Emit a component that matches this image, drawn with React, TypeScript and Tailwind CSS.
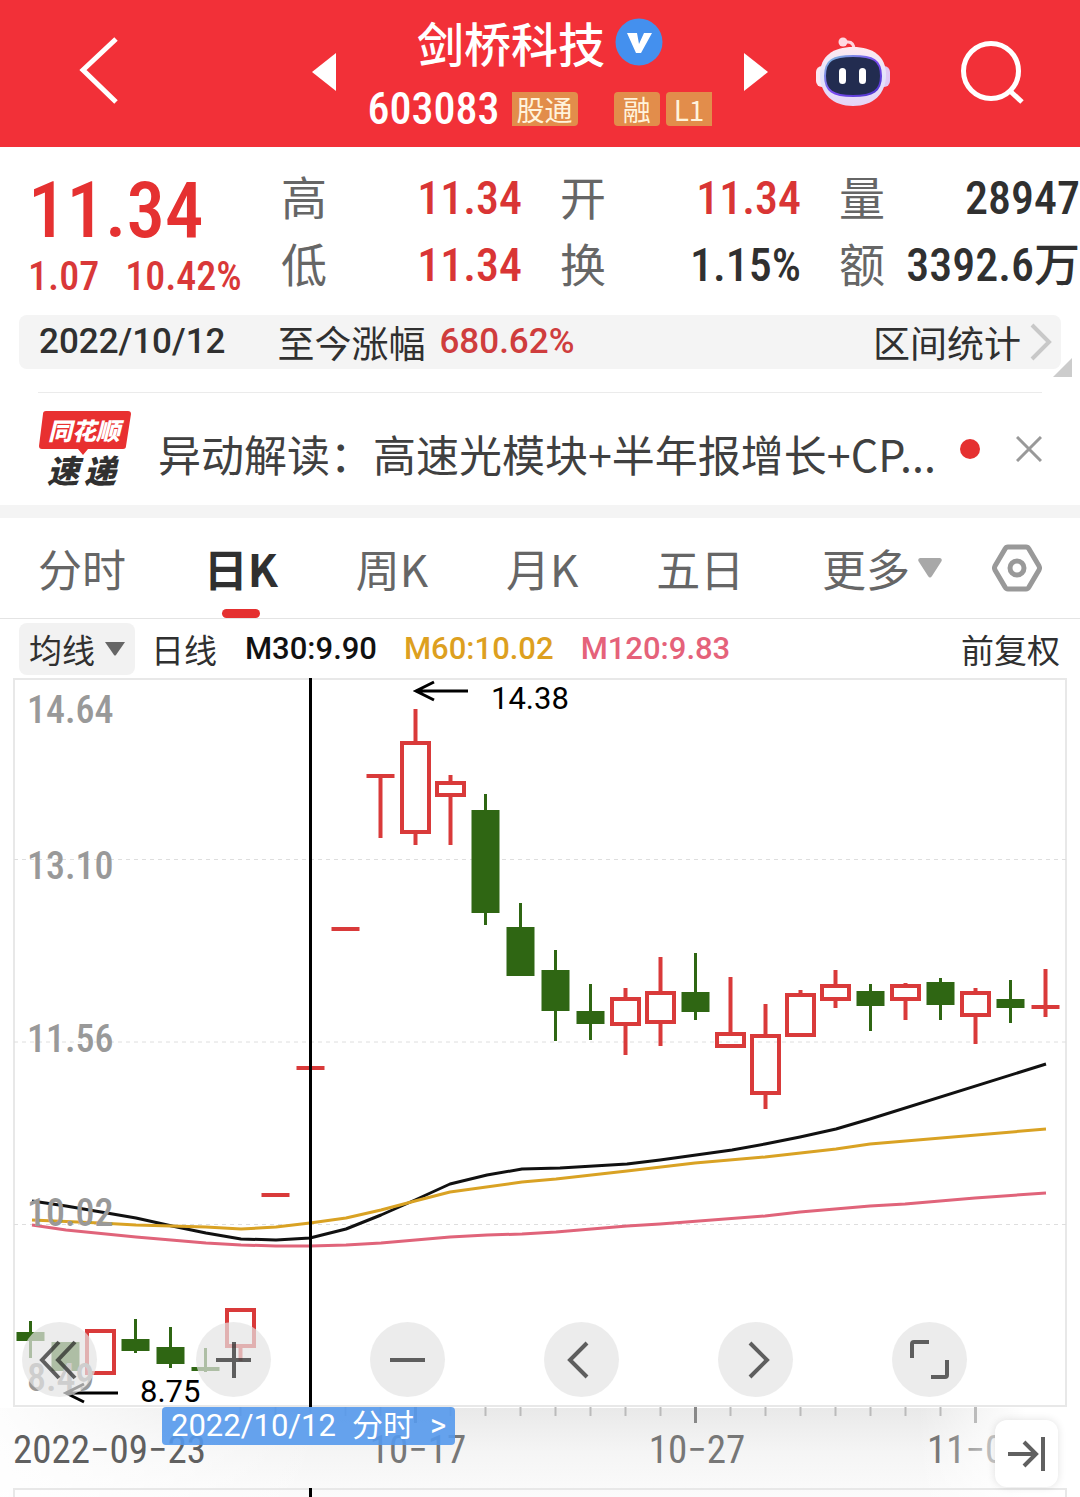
import type { ReactNode } from 'react'
import clsx from 'clsx'

const CJK = "font-['Noto_Sans_CJK_SC',sans-serif]"
const DIGITS = "font-['Roboto_Condensed','Liberation_Sans_Narrow',Roboto,'Noto_Sans_CJK_SC',sans-serif]"
const WIDE_DIGITS = "font-[Roboto,'Noto_Sans_CJK_SC',sans-serif]"

const RED = '#d93a3a'
const GREEN = '#2f6613'

const QUOTES = [
  { top: '高', topValue: '11.34', topRed: true, bottom: '低', bottomValue: '11.34', bottomRed: true },
  { top: '开', topValue: '11.34', topRed: true, bottom: '换', bottomValue: '1.15%', bottomRed: false },
  { top: '量', topValue: '28947', topRed: false, bottom: '额', bottomValue: '3392.6万', bottomRed: false },
]

const TABS = ['分时', '日K', '周K', '月K', '五日']

// slot, high, body top, body bottom, low, rising
const CANDLES: [number, number, number, number, number, boolean][] = [
  [0, 1321, 1332, 1341, 1358, false],
  [1, 1342, 1342, 1371, 1371, false],
  [2, 1329, 1329, 1375, 1375, true],
  [3, 1319, 1339, 1351, 1353, false],
  [4, 1327, 1347, 1364, 1368, false],
  [5, 1348, 1367, 1371, 1372, false],
  [6, 1308, 1308, 1348, 1361, true],
  [7, 1193, 1193, 1197, 1197, true],
  [8, 1066, 1066, 1070, 1070, true],
  [9, 927, 927, 931, 931, true],
  [10, 774, 774, 778, 838, true],
  [11, 709, 741, 834, 845, true],
  [12, 775, 781, 797, 845, true],
  [13, 794, 810, 913, 925, false],
  [14, 903, 927, 976, 976, false],
  [15, 950, 970, 1011, 1041, false],
  [16, 984, 1011, 1024, 1040, false],
  [17, 988, 997, 1026, 1055, true],
  [18, 957, 991, 1024, 1046, true],
  [19, 953, 992, 1012, 1020, false],
  [20, 977, 1032, 1048, 1048, true],
  [21, 1004, 1034, 1095, 1109, true],
  [22, 990, 993, 1037, 1037, true],
  [23, 970, 984, 1001, 1008, true],
  [24, 984, 991, 1006, 1031, false],
  [25, 983, 984, 1001, 1020, true],
  [26, 978, 982, 1005, 1020, false],
  [27, 988, 991, 1017, 1044, true],
  [28, 980, 999, 1008, 1023, false],
  [29, 969, 1005, 1009, 1017, true],
]

const MA30 =
  '32,1201 66,1206 136,1218 172,1226 206,1233 241,1239 276,1240 310,1238 346,1229 381,1215 415,1200 450,1184 487,1175 522,1169 560,1168 627,1164 660,1160 732,1150 765,1144 800,1137 836,1129 870,1119 1046,1064'
const MA60 =
  '32,1220 100,1223 136,1225 206,1227 241,1229 276,1227 310,1223 346,1218 381,1210 415,1201 450,1192 522,1182 556,1179 627,1171 695,1163 765,1157 836,1149 870,1144 1046,1129'
const MA120 =
  '32,1225 66,1230 136,1237 206,1243 241,1245 276,1246 310,1246 346,1245 381,1243 450,1237 487,1235 522,1234 556,1232 627,1226 660,1224 765,1216 800,1212 870,1206 905,1204 975,1198 1046,1193'

const PRICES = [
  { label: '14.64', y: 723 },
  { label: '13.10', y: 879 },
  { label: '11.56', y: 1052 },
  { label: '10.02', y: 1226 },
  { label: '8.49', y: 1391 },
]

function Robot() {
  return (
    <svg width="76" height="70" viewBox="0 0 76 70">
      <defs>
        <linearGradient id="shell" x1="0" y1="0" x2="0" y2="1">
          <stop offset="0" stopColor="#ffe9f0" />
          <stop offset="0.5" stopColor="#e3e4fb" />
          <stop offset="1" stopColor="#e6d4f6" />
        </linearGradient>
        <linearGradient id="rim" x1="0" y1="0" x2="1" y2="1">
          <stop offset="0" stopColor="#7fc4dc" />
          <stop offset="0.5" stopColor="#7b4bf0" />
          <stop offset="1" stopColor="#4a35c8" />
        </linearGradient>
      </defs>
      <rect x="1" y="29" width="12" height="21" rx="6" fill="#fbe8f2" />
      <rect x="63" y="29" width="12" height="21" rx="6" fill="#dfc9f5" />
      <path d="M28 5h5c4 0 6 3 6 8" fill="none" stroke="#ffd3dc" strokeWidth="3" />
      <circle cx="28" cy="5" r="4.5" fill="#ffd9e2" />
      <path d="M38 10c20 0 33 9 33 28S58 69 38 69 5 57 5 38s13-28 33-28z" fill="url(#shell)" />
      <path
        d="M38 19c20 0 28 4 28 20 0 15-8 20-28 20s-28-5-28-20c0-16 8-20 28-20z"
        fill="#222c50"
        stroke="url(#rim)"
        strokeWidth="2"
      />
      <rect x="24" y="31" width="7" height="16" rx="3.5" fill="#fff" />
      <rect x="44" y="31" width="7" height="16" rx="3.5" fill="#fff" />
    </svg>
  )
}

function Header() {
  return (
    <header className="grid h-[147px] grid-cols-[312px_1fr_312px] items-center bg-[#f23038] pb-1 text-white">
      <button aria-label="返回" className="justify-self-start pl-[78px]">
        <svg width="42" height="72" viewBox="0 0 42 72" fill="none" stroke="#fff" strokeWidth="5">
          <path d="M38 3 5 34l33 32" />
        </svg>
      </button>
      <div className="flex items-center justify-between">
        <button aria-label="上一只">
          <svg width="24" height="38" viewBox="0 0 24 38" fill="#fff">
            <path d="M24 0v38L0 19z" />
          </svg>
        </button>
        <div className="flex flex-col items-center pt-1">
          <h1 className="flex h-[70px] items-center gap-[10px] text-[47px] leading-[64px] font-medium">
            剑桥科技
            <svg width="48" height="48" viewBox="0 0 48 48">
              <circle cx="24" cy="24" r="23.5" fill="#4490ee" />
              <path d="M12 15h10l2 11 5-11h8L26 35h-5z" fill="#fff" />
            </svg>
          </h1>
          <div className="flex h-[64px] items-center">
            <span className={clsx(DIGITS, 'mr-3 text-[44px] font-medium')}>603083</span>
            <span className="flex h-[34px] items-center rounded-r-sm bg-[#e28d4b] px-[5px] text-[28px] leading-[30px] text-[#fff3dc]">股通</span>
            <span className="ml-9 flex h-[34px] items-center rounded-sm bg-[#e28d4b] px-[9px] text-[28px] leading-[30px] text-[#fff3dc]">融</span>
            <span className="ml-[6px] flex h-[34px] items-center rounded-l-sm bg-[#e28d4b] px-2 text-[28px] leading-[30px] text-[#fff3dc]">L1</span>
          </div>
        </div>
        <button aria-label="下一只">
          <svg width="24" height="38" viewBox="0 0 24 38" fill="#fff">
            <path d="M0 0v38l24-19z" />
          </svg>
        </button>
      </div>
      <div className="flex items-center justify-between pr-[56px] pl-[47px]">
        <button aria-label="智能助手">
          <Robot />
        </button>
        <button aria-label="搜索">
          <svg width="64" height="64" viewBox="0 0 64 64" fill="none" stroke="#fff" strokeWidth="5">
            <circle cx="31" cy="31" r="27.5" />
            <path d="m50 51 12 11" />
          </svg>
        </button>
      </div>
    </header>
  )
}

function Quote() {
  return (
    <section className="grid grid-cols-[243px_1fr_1fr_1fr] gap-x-[38px] pt-[18px] pb-[14px]">
      <div className={clsx(DIGITS, 'pl-7 font-medium whitespace-nowrap text-[#e53131]')}>
        <div className="h-[88px] text-[77px] leading-[92px]">11.34</div>
        <div className="flex gap-[26px] text-[40px] leading-[48px] text-[#d93838]">
          <span>1.07</span>
          <span>10.42%</span>
        </div>
      </div>
      {QUOTES.map((q) => (
        <dl
          key={q.top}
          className="grid auto-rows-[67px] grid-cols-[auto_1fr] text-[46px] leading-[61px] whitespace-nowrap text-[#666]"
        >
          <dt>{q.top}</dt>
          <dd
            className={clsx(DIGITS, 'text-right leading-[67px] font-medium', q.topRed ? 'text-[#d93535]' : 'text-[#303030]')}
          >
            {q.topValue}
          </dd>
          <dt>{q.bottom}</dt>
          <dd
            className={clsx(DIGITS, 'text-right leading-[67px] font-medium', q.bottomRed ? 'text-[#d93535]' : 'text-[#303030]')}
          >
            {q.bottomValue}
          </dd>
        </dl>
      ))}
    </section>
  )
}

function RangeBar() {
  return (
    <div className="relative mx-[19px] flex h-[54px] items-center rounded-lg bg-[#f4f4f4] pr-2 pl-5 text-[37px] leading-[52px] text-[#303030]">
      <span className={clsx(WIDE_DIGITS, 'text-[35px] font-medium')}>2022/10/12</span>
      <span className="ml-[52px]">至今涨幅</span>
      <span className={clsx(WIDE_DIGITS, 'ml-[14px] text-[35px] font-medium text-[#cf3d3d]')}>680.62%</span>
      <button className="ml-auto flex items-center gap-2">
        区间统计
        <svg width="24" height="40" viewBox="0 0 24 40" fill="none" stroke="#c8c8c8" strokeWidth="4">
          <path d="m3 3 17 17L3 37" />
        </svg>
      </button>
      <svg className="absolute -right-[11px] -bottom-2" width="19" height="19" viewBox="0 0 19 19" fill="#ccc">
        <path d="M19 0v19H0z" />
      </svg>
    </div>
  )
}

function News() {
  return (
    <section className="mx-[38px] mt-[23px] flex h-[113px] items-center border-t border-[#ebebeb]">
      <svg className="shrink-0 overflow-visible" width="94" height="78" viewBox="0 0 94 78">
        <path d="M8 1h82q3 0 3 3l-5 32q0 3-3 3H50l-5 6-5-6H4q-3 0-3-3L5 4q0-3 3-3z" fill="#e83030" />
        <g fontWeight="900" fontStyle="italic">
          <text x="10" y="30" fontSize="24" fill="#fff">同花顺</text>
          <text x="9" y="73" fontSize="32" fill="#303030">速</text>
          <text x="46" y="73" fontSize="32" fill="#303030">递</text>
        </g>
      </svg>
      <a href="#news" className="ml-[26px] min-w-0 flex-1 pt-2 text-[43px] leading-[64px] whitespace-nowrap text-[#404040]">
        异动解读：高速光模块+半年报增长+CP...
      </a>
      <span className="ml-4 size-5 shrink-0 rounded-full bg-[#e53030]" />
      <button aria-label="关闭" className="ml-9 shrink-0">
        <svg width="26" height="26" viewBox="0 0 26 26" stroke="#999" strokeWidth="3">
          <path d="m1 1 24 24M25 1 1 25" />
        </svg>
      </button>
    </section>
  )
}

function Tabs() {
  return (
    <div className="flex h-[101px] items-center border-b border-[#e4e4e4] px-[38px] text-[#666]">
      <nav className="flex h-full flex-1 items-center justify-between text-[44px] whitespace-nowrap">
        {TABS.map((tab) => (
          <button
            key={tab}
            className={clsx('relative h-full', tab === '日K' && 'font-bold text-[#303030]')}
          >
            {tab}
            {tab === '日K' && (
              <span className="absolute bottom-0 left-1/2 h-[9px] w-[38px] -translate-x-1/2 rounded-full bg-[#e53030]" />
            )}
          </button>
        ))}
        <button className="flex h-full items-center gap-2">
          更多
          <svg width="24" height="20" viewBox="0 0 24 20" fill="#a8a8a8">
            <path d="M2 0h20q3 1 1 4L14 18q-2 3-4 0L1 4Q-1 1 2 0z" />
          </svg>
        </button>
      </nav>
      <button aria-label="设置" className="ml-[50px]">
        <svg width="50" height="48" viewBox="0 0 50 48" fill="none" stroke="#999" strokeWidth="5">
          <path d="M16 3h18q2 0 3 2l10 17q1 2 0 4L37 43q-1 2-3 2H16q-2 0-3-2L3 26q-1-2 0-4L13 5q1-2 3-2z" />
          <circle cx="25" cy="24" r="7" />
        </svg>
      </button>
    </div>
  )
}

function Legend() {
  return (
    <div className="flex h-[59px] items-center pr-5 pl-[19px] text-[33px] leading-[48px] whitespace-nowrap text-[#303030]">
      <button className="flex h-[52px] items-center gap-[10px] rounded-lg bg-[#f2f2f2] px-[10px]">
        均线
        <svg width="20" height="14" viewBox="0 0 20 14" fill="#666">
          <path d="M0 0h20L11 13q-1 1-2 0z" />
        </svg>
      </button>
      <span className="ml-4">日线</span>
      <div className={clsx(WIDE_DIGITS, 'ml-7 flex gap-[27px] text-[31px] font-medium')}>
        <span className="text-[#111]">M30:9.90</span>
        <span className="text-[#dda01f]">M60:10.02</span>
        <span className="text-[#e5627a]">M120:9.83</span>
      </div>
      <button className="ml-auto">前复权</button>
    </div>
  )
}

function Candle({ data }: { data: (typeof CANDLES)[number] }) {
  const [slot, high, top, bottom, low, rising] = data
  const x = 30.5 + slot * 35
  const color = rising ? RED : GREEN
  const flat = bottom - top < 6
  return (
    <g stroke={color} strokeWidth="4" fill="none">
      {high < top && <path d={`M${x} ${high}V${top}`} strokeWidth={rising ? 4 : 3} />}
      {low > bottom && <path d={`M${x} ${bottom}V${low}`} strokeWidth={rising ? 4 : 3} />}
      {rising && !flat ? (
        <rect x={x - 13.5} y={top + 2} width="27" height={bottom - top - 4} />
      ) : (
        <rect x={x - 14} y={top} width="28" height={bottom - top} fill={color} stroke="none" />
      )}
    </g>
  )
}

function RoundButton({ label, children }: { label: string; children: ReactNode }) {
  return (
    <button aria-label={label} className="size-[75px] rounded-full bg-[#e4e4e4]/70">
      <svg viewBox="0 0 75 75" fill="none" stroke="#222" strokeOpacity="0.7" strokeWidth="4">
        {children}
      </svg>
    </button>
  )
}

function Chart() {
  return (
    <section className="relative">
      <svg className="block h-auto w-full" viewBox="0 678 1080 819">
        <defs>
          <linearGradient id="haze" x1="0" y1="0" x2="0" y2="1">
            <stop offset="0" stopColor="#e9e9e9" />
            <stop offset="0.5" stopColor="#f5f5f5" />
            <stop offset="1" stopColor="#fbfbfb" />
          </linearGradient>
          <linearGradient id="edges">
            <stop offset="0" stopColor="#fff" stopOpacity="0.9" />
            <stop offset="0.3" stopColor="#fff" stopOpacity="0" />
            <stop offset="0.85" stopColor="#fff" stopOpacity="0" />
            <stop offset="0.95" stopColor="#fff" />
          </linearGradient>
          <linearGradient id="fade" gradientUnits="userSpaceOnUse" x1="940" y1="0" x2="1010" y2="0">
            <stop offset="0" stopColor="#777" />
            <stop offset="1" stopColor="#ddd" />
          </linearGradient>
        </defs>
        <rect x="0" y="1408" width="1080" height="89" fill="url(#haze)" />
        <rect x="0" y="1408" width="1080" height="89" fill="url(#edges)" />
        <g fill="none" stroke="#e8e8e8" strokeWidth="2">
          <rect x="14" y="679" width="1052" height="727" />
          <path d="M14 1500V1489H1066V1500" />
        </g>
        <path d="M14 859.5H1066M14 1042H1066M14 1224.5H1066" stroke="#dedede" strokeWidth="1" strokeDasharray="4 4" />
        {CANDLES.map((c) => (
          <Candle key={c[0]} data={c} />
        ))}
        <g fill="none" strokeWidth="3" strokeLinejoin="round">
          <polyline points={MA30} stroke="#111" />
          <polyline points={MA120} stroke="#e0647a" />
          <polyline points={MA60} stroke="#d9a224" />
        </g>
        <g className={DIGITS} fontSize="38" fontWeight="500" fill="#999">
          {PRICES.map((p) => (
            <text key={p.label} x="27" y={p.y}>{p.label}</text>
          ))}
        </g>
        <g fill="none" stroke="#000" strokeWidth="3">
          <path d="M468 691H416M434 682 416 691 434 700" />
          <path d="M118 1393H66M84 1384 66 1393 84 1402" />
        </g>
        <g className={WIDE_DIGITS} fontSize="31" fill="#000">
          <text x="491" y="709">14.38</text>
          <text x="140" y="1402">8.75</text>
        </g>
        {CANDLES.slice(6, 28).map(([slot]) => {
          const major = slot === 11 || slot === 19 || slot === 27
          return (
            <path
              key={slot}
              d={`M${30.5 + slot * 35} 1407v${major ? 16 : 9}`}
              stroke={slot === 19 || slot === 11 ? '#888' : '#bbb'}
              strokeWidth={major ? 3 : 2}
            />
          )
        })}
        <g className={DIGITS} fontSize="39" fill="#777">
          <text x="13" y="1463" fill="#606060">2022−09−23</text>
          <text x="418" y="1463" textAnchor="middle">10−17</text>
          <text x="697" y="1463" textAnchor="middle">10−27</text>
          <text x="927" y="1463" fill="url(#fade)">11−04</text>
        </g>
        <path d="M310.5 678V1407M310.5 1488V1497" stroke="#000" strokeWidth="3" />
      </svg>

      <div className="absolute right-[113px] bottom-[100px] left-[22px] flex justify-between">
        <RoundButton label="最左">
          <path d="M37 20 20 38l17 18M53 20 36 38l17 18" />
        </RoundButton>
        <RoundButton label="放大">
          <path d="M20 38H55M38 20V56" />
        </RoundButton>
        <RoundButton label="缩小">
          <path d="M20 38H55" />
        </RoundButton>
        <RoundButton label="左移">
          <path d="M43 21 26 38l17 17" />
        </RoundButton>
        <RoundButton label="右移">
          <path d="m32 21 17 17-17 17" />
        </RoundButton>
        <RoundButton label="全屏">
          <path d="M20 36V22q0-2 2-2H37M55 38V53q0 2-2 2H39" />
        </RoundButton>
      </div>

      <button
        className={clsx(
          WIDE_DIGITS,
          'absolute bottom-[52px] left-[162px] flex h-[38px] items-center gap-4 rounded-sm bg-[#5599ec]/90 px-[9px] text-[31px] leading-[36px] whitespace-nowrap text-white'
        )}
      >
        <span>2022/10/12</span>
        <span>分时</span>
        <span>&gt;</span>
      </button>

      <button
        aria-label="最新"
        className="absolute right-[22px] bottom-[10px] flex h-[67px] w-[63px] items-center justify-center rounded-xl bg-white shadow-[0_0_8px_rgba(0,0,0,0.12)]"
      >
        <svg width="38" height="34" viewBox="0 0 38 34" fill="none" stroke="#606060" strokeWidth="4">
          <path d="M0 17H27M16 5 28 17 16 29M35 0V34" />
        </svg>
      </button>
    </section>
  )
}

export default function App() {
  return (
    <main className={clsx(CJK, 'overflow-hidden bg-white')}>
      <Header />
      <Quote />
      <RangeBar />
      <News />
      <div className="h-[13px] bg-[#f4f4f4]" />
      <Tabs />
      <Legend />
      <Chart />
    </main>
  )
}
